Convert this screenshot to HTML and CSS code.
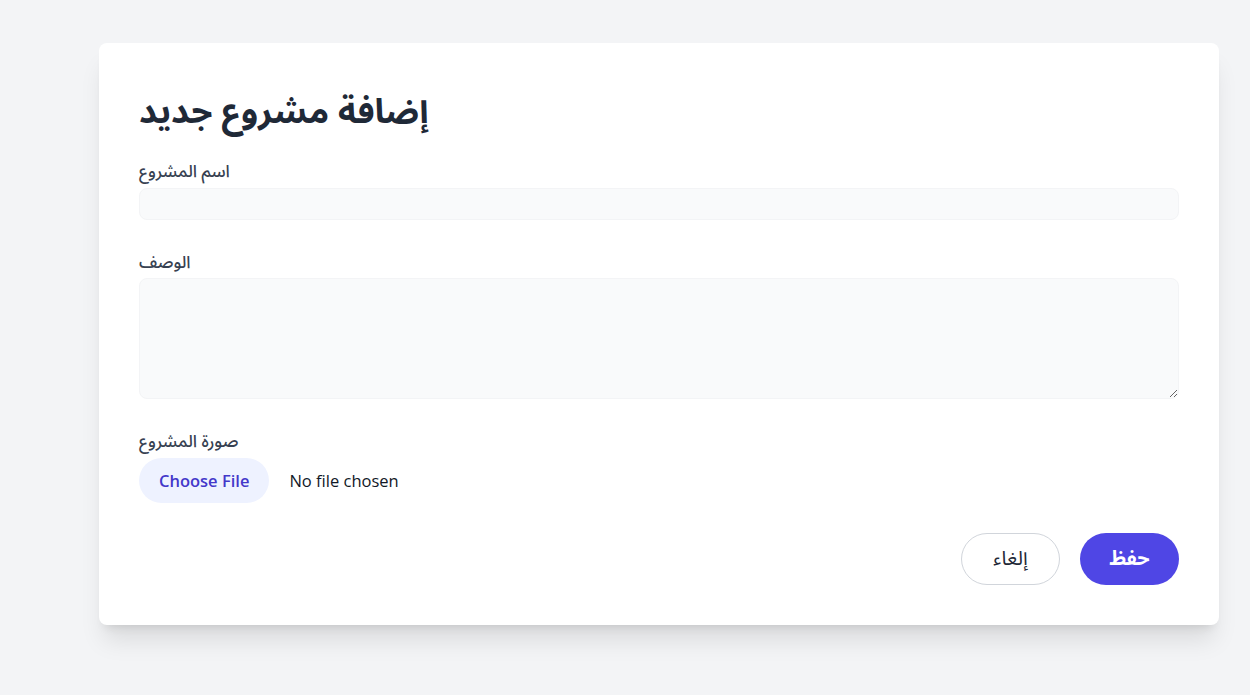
FILE: index.html
```html
<!DOCTYPE html>
<html lang="ar">
<head>
<meta charset="utf-8">
<link rel="stylesheet" href="styles.css">
</head>
<body>
<main class="page">
  <section class="card">
    <h1 class="title">إضافة مشروع جديد</h1>
    <form class="form">
      <div class="field">
        <label class="label">اسم المشروع</label>
        <input class="input" type="text">
      </div>
      <div class="field field-desc">
        <label class="label">الوصف</label>
        <textarea class="textarea"></textarea>
      </div>
      <div class="field field-file">
        <label class="label">صورة المشروع</label>
        <input class="file" type="file">
      </div>
      <div class="actions">
        <button type="button" class="btn btn-cancel">إلغاء</button>
        <button type="button" class="btn btn-save">حفظ</button>
      </div>
    </form>
  </section>
</main>
</body>
</html>
```
FILE: styles.css
```css
* { box-sizing: border-box; }
html, body { margin: 0; padding: 0; }
body {
  background: #f3f4f6;
  font-family: "Open Sans", "Noto Sans Arabic", "Noto Sans Arabic UI", "Noto Naskh Arabic", "Noto Sans", sans-serif;
  color: #1f2937;
}
.page {
  padding: 43px 31px 40px 99px;
}
.card {
  background: #fff;
  border-radius: 8px;
  box-shadow: 0 20px 25px -5px rgba(0,0,0,0.1), 0 8px 10px -6px rgba(0,0,0,0.1);
  padding: 40px;
}
.title {
  margin: 0 0 22px;
  font-size: 34.5px;
  line-height: 54px;
  font-weight: 700;
  color: #1f2937;
}
.form {
  display: flex;
  flex-direction: column;
}
.field {
  display: flex;
  flex-direction: column;
  margin-bottom: 30px;
}
.field-desc { margin-bottom: 30px; }
.field-file { margin-bottom: 30px; }
.label {
  font-size: 17px;
  line-height: 24px;
  font-weight: 500;
  color: #374151;
  margin-bottom: 5px;
}
.field-desc .label { margin-bottom: 4px; }
.input, .textarea {
  width: 100%;
  border: 1px solid #f3f4f6;
  background: #f9fafb;
  border-radius: 8px;
  font-family: inherit;
  font-size: 16px;
  outline: none;
}
.input { height: 32px; }
.textarea { height: 121px; resize: vertical; display: block; }
.file {
  font-family: inherit;
  font-size: 16.5px;
  color: #111827;
}
.file::file-selector-button {
  font-family: inherit;
  font-size: 16.5px;
  font-weight: 600;
  color: #4338ca;
  background: #eef2ff;
  border: none;
  border-radius: 9999px;
  height: 45px;
  padding: 0 20px;
  margin-right: 20px;
  cursor: pointer;
}
.actions {
  display: flex;
  justify-content: flex-end;
  gap: 20px;
}
.btn {
  height: 52px;
  width: 99px;
  border-radius: 9999px;
  font-family: inherit;
  font-size: 20px;
  cursor: pointer;
}
.btn-cancel {
  background: #fff;
  border: 1px solid #d1d5db;
  color: #1f2937;
}
.btn-save {
  background: #4f46e5;
  border: none;
  color: #fff;
  font-weight: 700;
}
```
